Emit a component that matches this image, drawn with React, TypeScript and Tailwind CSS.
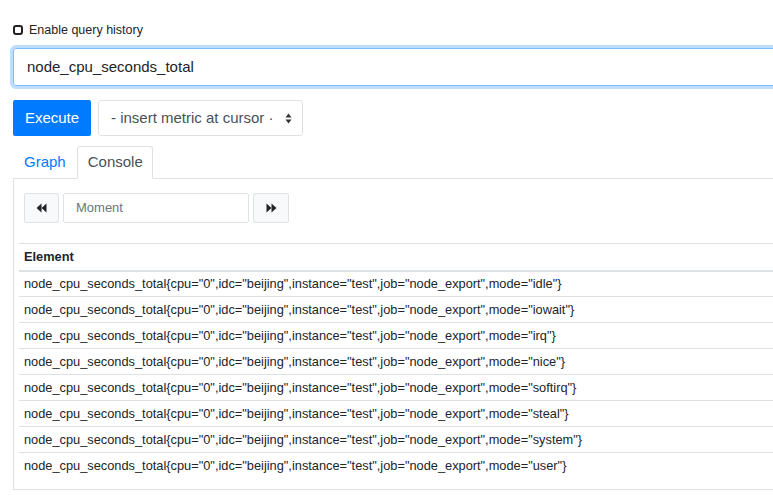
import React from "react";

const modes = ["idle", "iowait", "irq", "nice", "softirq", "steal", "system", "user"];

function DoubleArrow({ dir }: { dir: "left" | "right" }) {
    return (
        <svg width="11" height="10" viewBox="0 0 11 10" className={dir === "left" ? "rotate-180" : ""}>
            <path d="M0.5 0.5 L5.5 5 L0.5 9.5 Z" fill="#212529" />
            <path d="M5.5 0.5 L10.5 5 L5.5 9.5 Z" fill="#212529" />
        </svg>
    );
}

export default function App() {
    return (
        <div className="w-[773px] h-[504px] overflow-hidden bg-white text-[#212529] font-['Liberation_Sans',Arial,sans-serif]">
            <div className="w-[840px] pl-[13px] pt-[24px]">
                {/* query history toggle */}
                <label className="flex items-center gap-[6px] h-[12px] text-[12.5px] leading-none">
                    <span className="w-[10px] h-[10px] rounded-[3px] border-2 border-[#222]"></span>
                    Enable query history
                </label>

                {/* expression input */}
                <div className="mt-[12px] h-[38px] border border-[#80bdff] rounded-[3px] shadow-[0_0_0_3px_rgba(0,123,255,0.25)] flex items-center pl-[13px] text-[15px]">
                    node_cpu_seconds_total
                </div>

                <div className="mt-[14px] flex gap-[7px]">
                    <button className="w-[78px] h-[36px] bg-[#007bff] text-white text-[15px] rounded-[2px]">
                        Execute
                    </button>
                    <div className="w-[205px] h-[36px] border border-[#dee2e6] rounded-[3px] flex items-center pl-[12px] pr-[10px] text-[15px] text-[#495057]">
                        <span className="flex-1">- insert metric at cursor ·</span>
                        <svg width="7" height="11" viewBox="0 0 7 11">
                            <path d="M0.5 4.5 L3.5 0.5 L6.5 4.5 Z" fill="#333" />
                            <path d="M0.5 6.5 L3.5 10.5 L6.5 6.5 Z" fill="#333" />
                        </svg>
                    </div>
                </div>

                {/* tabs */}
                <div className="mt-[10px] flex items-end border-b border-[#dee2e6] h-[33px]">
                    <a className="h-full flex items-center px-[11px] text-[15px] text-[#007bff]">Graph</a>
                    <a className="h-[33px] -mb-px flex items-center px-[10px] w-[76px] text-[15px] text-[#495057] bg-white border border-[#dee2e6] border-b-white rounded-t-[3px]">
                        Console
                    </a>
                </div>

                {/* tab content */}
                <div className="border-l border-b border-[#dee2e6] pt-[14px] pb-[10px] h-[311px]">
                    <div className="flex gap-[4px] pl-[10px]">
                        <button className="w-[35px] h-[30px] bg-[#f8f9fa] border border-[#dee2e6] rounded-[2px] flex items-center justify-center">
                            <DoubleArrow dir="left" />
                        </button>
                        <div className="w-[186px] h-[30px] border border-[#dee2e6] rounded-[2px] flex items-center pl-[12px] text-[13px] text-[#6c757d]">
                            Moment
                        </div>
                        <button className="w-[36px] h-[30px] bg-[#f8f9fa] border border-[#dee2e6] rounded-[2px] flex items-center justify-center">
                            <DoubleArrow dir="right" />
                        </button>
                    </div>

                    <table className="mt-[20px] ml-[5px] w-[800px] text-[12.8px] border-collapse">
                        <thead>
                            <tr className="border-t border-b-2 border-[#dee2e6] h-[27px]">
                                <th className="text-left font-bold px-[5px]">Element</th>
                            </tr>
                        </thead>
                        <tbody>
                            {modes.map((m, i) => (
                                <tr key={m} className={`h-[26px] ${i > 0 ? "border-t border-[#dee2e6]" : ""}`}>
                                    <td className="px-[5px]">
                                        node_cpu_seconds_total{"{"}cpu="0",idc="beijing",instance="test",job="node_export",mode="{m}"{"}"}
                                    </td>
                                </tr>
                            ))}
                        </tbody>
                    </table>
                </div>
            </div>
        </div>
    );
}
